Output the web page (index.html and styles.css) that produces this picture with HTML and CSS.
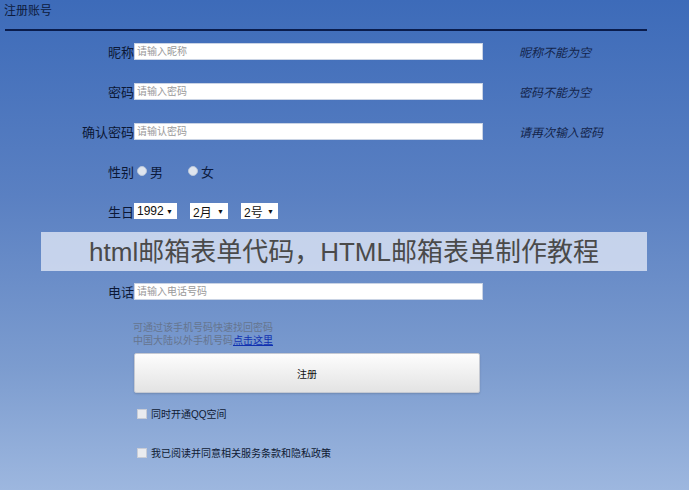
FILE: index.html
```html
<!DOCTYPE html>
<html lang="zh-CN">
<head>
  <meta charset="UTF-8">
  <title>注册账号</title>
  <link rel="stylesheet" href="styles.css">
</head>
<body>
  <div class="title">注册账号</div>
  <div class="rule"></div>

  <div class="form">
    <div class="row">
      <label>昵称</label>
      <input type="text" placeholder="请输入昵称">
      <span class="tip">昵称不能为空</span>
    </div>
    <div class="row">
      <label>密码</label>
      <input type="password" placeholder="请输入密码">
      <span class="tip">密码不能为空</span>
    </div>
    <div class="row">
      <label>确认密码</label>
      <input type="password" placeholder="请输认密码">
      <span class="tip">请再次输入密码</span>
    </div>
    <div class="row">
      <label>性别</label>
      <div class="choices">
        <span class="radio"></span><span class="opt">男</span>
        <span class="radio"></span><span class="opt">女</span>
      </div>
    </div>
    <div class="row">
      <label>生日</label>
      <div class="choices">
        <span class="select year">1992 <i>▼</i></span>
        <span class="select month">2月 <i>▼</i></span>
        <span class="select day">2号 <i>▼</i></span>
      </div>
    </div>
    <!-- row hidden under the banner -->
    <div class="row"></div>
    <div class="row">
      <label>电话</label>
      <input type="text" placeholder="请输入电话号码">
    </div>
  </div>

  <div class="note">
    可通过该手机号码快速找回密码<br>
    中国大陆以外手机号码<a href="#">点击这里</a>
  </div>

  <button class="submit">注册</button>

  <div class="check"><span class="box"></span>同时开通QQ空间</div>
  <div class="check second"><span class="box"></span>我已阅读并同意相关服务条款和隐私政策</div>

  <div class="banner">html邮箱表单代码，HTML邮箱表单制作教程</div>
</body>
</html>
```

FILE: styles.css
```css
body {
  margin: 0;
  min-height: 490px;
  position: relative;
  font-family: "Liberation Sans", "Noto Sans CJK SC", sans-serif;
  background: linear-gradient(to bottom, #3d6bb9 0%, #5a80c2 40%, #7c9ccf 75%, #9db7df 100%);
  color: #0c1a3c;
  overflow: hidden;
}

.title {
  font-size: 12px;
  line-height: 14px;
  padding: 4px 0 0 4px;
  color: #0d1b3d;
}

.rule {
  margin: 11px 0 0 5px;
  width: 642px;
  height: 2px;
  background: #0a1c4c;
}

.row {
  display: grid;
  grid-template-columns: 134px 349px auto;
  align-items: center;
  height: 40px;
}

.row label {
  text-align: right;
  font-size: 13px;
  color: #0c1836;
}

.row input {
  height: 17px;
  box-sizing: border-box;
  border: 1px solid #c9d3e4;
  background: #fff;
  padding: 0 2px;
  font-size: 10px;
  font-family: inherit;
  outline: none;
}

.row input::placeholder {
  color: #9a9a9a;
}

.tip {
  margin-left: 36px;
  font-size: 12px;
  font-style: italic;
  color: #13244a;
}

.choices {
  display: flex;
  align-items: center;
}

.radio {
  width: 8px;
  height: 8px;
  border-radius: 50%;
  background: #dfe5ee;
  border: 1px solid #b9c6da;
  margin: 0 3px 0 3px;
}

.opt {
  font-size: 13px;
  margin-right: 22px;
}

.select {
  display: inline-flex;
  align-items: center;
  justify-content: space-between;
  height: 16px;
  background: #fff;
  font-size: 12px;
  color: #111;
  padding: 0 4px 0 3px;
  box-sizing: border-box;
}

.select i {
  font-style: normal;
  font-size: 7px;
}

.year {
  width: 43px;
  margin-right: 13px;
}

.month {
  width: 38px;
  margin-right: 13px;
}

.day {
  width: 37px;
}

.note {
  margin: 10px 0 0 133px;
  font-size: 10px;
  line-height: 13px;
  color: #66758f;
}

.note a {
  color: #1030b0;
}

.submit {
  display: block;
  margin: 6px 0 0 134px;
  width: 346px;
  height: 40px;
  border: 1px solid #c5c9d2;
  border-radius: 2px;
  background: linear-gradient(to bottom, #fdfdfd, #e3e3e3);
  box-shadow: 0 1px 2px rgba(0, 0, 0, 0.15);
  font-family: inherit;
  font-size: 10px;
  color: #111;
}

.check {
  display: flex;
  align-items: center;
  margin: 13px 0 0 137px;
  font-size: 10px;
  color: #0f1a33;
}

.check.second {
  margin-top: 24px;
}

.box {
  width: 8px;
  height: 8px;
  background: #e9ebef;
  border: 1px solid #c8ccd6;
  margin-right: 4px;
}

.banner {
  position: absolute;
  left: 41px;
  top: 232px;
  width: 606px;
  height: 39px;
  background: rgba(225, 232, 246, 0.78);
  color: #4a4a4a;
  font-size: 26px;
  line-height: 40px;
  text-align: center;
}
```
